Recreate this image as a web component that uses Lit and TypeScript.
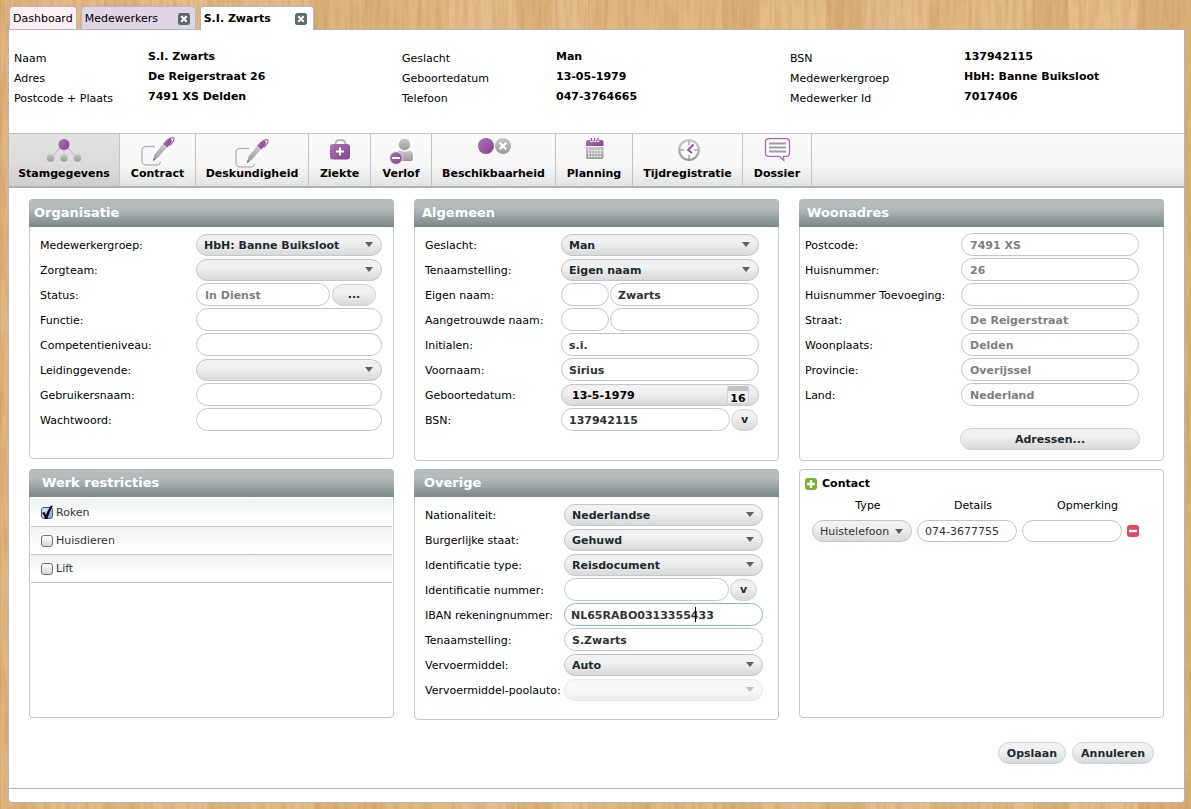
import { LitElement, html, css, svg, nothing, unsafeCSS } from "lit";
import type { TemplateResult } from "lit";
import { customElement, state } from "lit/decorators.js";
import { classMap } from "lit/directives/class-map.js";

/* Wooden desktop: planks of varying tone with a fine vertical grain. */
const PLANKS: Array<[number, string]> = [
  [0, "e1b680"], [35, "e4bc87"], [104, "deb47e"], [138, "e5be8a"], [207, "e0b67f"],
  [242, "e3bc87"], [314, "dcb17a"], [328, "e1b781"], [366, "dbb079"], [386, "e1b882"],
  [448, "e5be8b"], [517, "ddb27b"], [552, "e5bf8b"], [588, "e1b781"], [620, "e0b680"],
  [655, "e1b983"], [723, "dcb17b"], [759, "e4bd88"], [826, "dbb079"], [862, "e5be8b"],
  [930, "e0b680"], [965, "e4bd89"], [1033, "dcb17b"], [1068, "e5be8a"], [1138, "dbb079"],
];
const plankRects = PLANKS.map(([x, c], i) => {
  const w = (PLANKS[i + 1]?.[0] ?? 1191) - x;
  return `<rect x='${x}' width='${w}' height='900' fill='%23${c}'/><rect x='${x}' width='1' height='900' fill='%23c1935e' fill-opacity='.2'/>`;
}).join("");
const WOOD =
  `data:image/svg+xml,<svg xmlns='http://www.w3.org/2000/svg' width='1191' height='900'>` +
  `<filter id='g' x='0' y='0' width='1' height='1' color-interpolation-filters='sRGB'><feTurbulence type='fractalNoise' baseFrequency='.22 .018' numOctaves='3' seed='7'/>` +
  `<feColorMatrix values='0 0 0 0 .72  0 0 0 0 .52  0 0 0 0 .3  1.8 0 0 0 -.7'/></filter>` +
  plankRects +
  `<rect width='1191' height='900' filter='url(%23g)' opacity='.42'/></svg>`;

const CARET =
  `data:image/svg+xml,<svg xmlns='http://www.w3.org/2000/svg' width='8' height='5'><path d='M0 0h8L4 5z' fill='%23606060'/></svg>`;

const gradients = svg`
  <defs>
    <linearGradient id="p" x1="0" y1="0" x2="1" y2="1"><stop offset="0" stop-color="#ab74b3"/><stop offset="1" stop-color="#84408f"/></linearGradient>
    <linearGradient id="g" x1="0" y1="0" x2="0" y2="1"><stop offset="0" stop-color="#c6c8c9"/><stop offset="1" stop-color="#989b9e"/></linearGradient>
  </defs>`;

const pen = svg`
  <path d="M20 10.500H11a4 4 0 0 0-4 4v10.500a4 4 0 0 0 4 4h10.500q3.500 0 4-3.500" fill="none" stroke="#b4b7b9" stroke-width="1.400"/>
  <path d="M18 25l1.500-6.500 8-10 4 3.300-8.500 9.700z" fill="url(#g)"/>
  <path d="M18 25l.7-2.800 1.700 1.300z" fill="#84408f"/>
  <path d="M28 8q3-4.500 6.500-6l2.500 2q-.5 4-5 7.500z" fill="url(#p)"/>
  <path d="M34 3q3.500-2.200 4.700-1t-1.200 4.300l-2.500 3.200" fill="none" stroke="#9a5ba3" stroke-width="1.200"/>`;

const ICONS: Record<string, unknown> = {
  network: svg`
    <path d="M22 9L8.500 23M22 9v14M22 9l13.500 14" stroke="#c3c3c3" stroke-width="1.200"/>
    <circle cx="22" cy="9.500" r="5.500" fill="url(#p)"/>
    <circle cx="8.500" cy="23" r="3.800" fill="url(#g)"/><circle cx="22" cy="23" r="3.800" fill="url(#g)"/><circle cx="35.500" cy="23" r="3.800" fill="url(#g)"/>`,
  pen: svg`<g transform="translate(-1 1)">${pen}</g>`,
  penLow: svg`<g transform="translate(-1 3)">${pen}</g>`,
  bag: svg`
    <path d="M17.500 9q0-4 5-4t5 4" fill="none" stroke="#b4b6b8" stroke-width="1.800"/>
    <rect x="12" y="9" width="20" height="15.500" rx="3" fill="url(#p)"/>
    <path d="M22 12.500v8M18 16.500h8" stroke="#fff" stroke-width="2"/>`,
  person: svg`
    <circle cx="25.500" cy="9.500" r="5.700" fill="url(#g)"/>
    <path d="M17 26v-5q0-5 4-5.500 4.500 2.500 9 0 4 .5 4 5.500v3q0 2-2 2z" fill="url(#g)"/>
    <circle cx="17" cy="23" r="6.300" fill="url(#p)" stroke="#f4f4f4" stroke-width=".8"/>
    <path d="M13 23h8" stroke="#fff" stroke-width="2"/>`,
  availability: svg`
    <circle cx="14" cy="11" r="8" fill="url(#p)"/><circle cx="31" cy="11" r="8" fill="url(#g)"/>
    <path d="M27.700 7.700l6.600 6.600M34.300 7.700l-6.600 6.600" stroke="#fff" stroke-width="2.200"/>`,
  calendar: svg`
    <path d="M14 11V7q0-2 2-2h13.500q2 0 2 2v4z" fill="url(#p)"/>
    <path d="M19.500 3v4M22.700 3v4M26 3v4" stroke="#f8f8f8" stroke-width="2.400"/>
    <path d="M19.500 3v3M22.700 3v3M26 3v3" stroke="#8d4b98" stroke-width="1.200"/>
    <path d="M14 12h17.500v10q0 2-2 2H16q-2 0-2-2z" fill="url(#g)"/>
    <path d="M16 15.500h14M16 18.500h14M16 21.500h14" stroke="#fff" stroke-width="1.300" stroke-dasharray="1.600 1.300"/>`,
  clock: svg`
    <circle cx="23" cy="15" r="9.800" fill="#fafafa" stroke="url(#g)" stroke-width="2.200"/>
    <path d="M23 6v4M23 20v4M14 15h4M28 15h4" stroke="#a4a7a9" stroke-width="1.500"/>
    <path d="M27.500 9.500L22 15l4 3" fill="none" stroke="#9350a0" stroke-width="1.800"/>`,
  speech: svg`
    <path d="M14 3.700h17q3.500 0 3.500 3.300v11q0 3.300-3.500 3.300h-2.500l.2 4-4.200-4H14q-3.500 0-3.500-3.300V7q0-3.300 3.500-3.300z" fill="#fdfdfd" stroke="#a06ca9" stroke-width="1.300"/>
    <path d="M14 8.500h17M14 12.500h17M14 16.500h17" stroke="#9a9c9e" stroke-width="1.800"/>`,
};

const closeIcon = svg`
  <rect width="12" height="12" rx="2.500" fill="#5d6a6d"/>
  <path d="M3.300 3.300l5.400 5.400M8.700 3.300L3.300 8.700" stroke="#fff" stroke-width="2.200"/>`;

interface Field {
  id: string;
  label: string;
  kind?: "text" | "select" | "date";
  value?: string;
  prefix?: boolean;
  action?: string;
  readonly?: boolean;
  disabled?: boolean;
  active?: boolean;
}

const ORGANISATION: Field[] = [
  { id: "groep", label: "Medewerkergroep:", kind: "select", value: "HbH: Banne Buiksloot" },
  { id: "zorgteam", label: "Zorgteam:", kind: "select" },
  { id: "status", label: "Status:", value: "In Dienst", readonly: true, action: "..." },
  { id: "functie", label: "Functie:" },
  { id: "niveau", label: "Competentieniveau:" },
  { id: "leiding", label: "Leidinggevende:", kind: "select" },
  { id: "gebruiker", label: "Gebruikersnaam:" },
  { id: "wachtwoord", label: "Wachtwoord:" },
];
const GENERAL: Field[] = [
  { id: "geslacht", label: "Geslacht:", kind: "select", value: "Man" },
  { id: "tenaam", label: "Tenaamstelling:", kind: "select", value: "Eigen naam" },
  { id: "eigen", label: "Eigen naam:", value: "Zwarts", prefix: true },
  { id: "aangetrouwd", label: "Aangetrouwde naam:", prefix: true },
  { id: "initialen", label: "Initialen:", value: "s.i." },
  { id: "voornaam", label: "Voornaam:", value: "Sirius" },
  { id: "geboorte", label: "Geboortedatum:", kind: "date", value: "13-5-1979" },
  { id: "bsn", label: "BSN:", value: "137942115", action: "v" },
];
const ADDRESS: Field[] = [
  { id: "postcode", label: "Postcode:", value: "7491 XS", readonly: true },
  { id: "huisnummer", label: "Huisnummer:", value: "26", readonly: true },
  { id: "toevoeging", label: "Huisnummer Toevoeging:", readonly: true },
  { id: "straat", label: "Straat:", value: "De Reigerstraat", readonly: true },
  { id: "woonplaats", label: "Woonplaats:", value: "Delden", readonly: true },
  { id: "provincie", label: "Provincie:", value: "Overijssel", readonly: true },
  { id: "land", label: "Land:", value: "Nederland", readonly: true },
];
const OTHER: Field[] = [
  { id: "nationaliteit", label: "Nationaliteit:", kind: "select", value: "Nederlandse" },
  { id: "burgerlijk", label: "Burgerlijke staat:", kind: "select", value: "Gehuwd" },
  { id: "idtype", label: "Identificatie type:", kind: "select", value: "Reisdocument" },
  { id: "idnummer", label: "Identificatie nummer:", action: "v" },
  { id: "iban", label: "IBAN rekeningnummer:", value: "NL65RABO0313355433", active: true },
  { id: "rekeningnaam", label: "Tenaamstelling:", value: "S.Zwarts" },
  { id: "vervoer", label: "Vervoermiddel:", kind: "select", value: "Auto" },
  { id: "poolauto", label: "Vervoermiddel-poolauto:", kind: "select", disabled: true },
];
const SUMMARY = [
  [["Naam", "S.I. Zwarts"], ["Adres", "De Reigerstraat 26"], ["Postcode + Plaats", "7491 XS Delden"]],
  [["Geslacht", "Man"], ["Geboortedatum", "13-05-1979"], ["Telefoon", "047-3764665"]],
  [["BSN", "137942115"], ["Medewerkergroep", "HbH: Banne Buiksloot"], ["Medewerker Id", "7017406"]],
];
const SECTIONS = [
  ["Stamgegevens", "network"], ["Contract", "pen"], ["Deskundigheid", "penLow"],
  ["Ziekte", "bag"], ["Verlof", "person"], ["Beschikbaarheid", "availability"],
  ["Planning", "calendar"], ["Tijdregistratie", "clock"], ["Dossier", "speech"],
];

@customElement("app-root")
export class AppRoot extends LitElement {
  @state() private section = "Stamgegevens";

  static styles = css`
    :host {
      display: flex;
      flex-direction: column;
      box-sizing: border-box;
      min-height: 100vh;
      padding: 6px 6px 6px 8px;
      background: #e0b983 url("${unsafeCSS(WOOD)}");
      font: 11px/14px Verdana, "DejaVu Sans", sans-serif;
      color: #000;
    }
    * { box-sizing: border-box; }
    button, input, select { font: inherit; margin: 0; color: inherit; }
    button { padding: 0; cursor: pointer; }

    .tabs { display: flex; gap: 4px; height: 23px; padding-left: 1px; }
    .tab {
      display: flex; align-items: center; justify-content: space-between;
      padding: 1px 3px 0; border: 1px solid #b3b8c4; border-bottom: 0;
      border-radius: 4px 4px 0 0; background: #fbeff4;
    }
    .tab.list { width: 115px; padding-right: 5px; background: #e0d5e4; }
    .tab.current { width: 114px; height: 24px; padding: 0 6px 0 3px; background: #fff; font-weight: bold; z-index: 1; }
    .tab a { color: inherit; text-decoration: none; }
    .close { width: 12px; height: 12px; border: 0; background: none; display: block; }
    .close svg { display: block; }

    .window {
      flex: 1; display: flex; flex-direction: column;
      border: 1px solid #b2b5bb; border-radius: 0 0 4px 4px; background: #fff;
    }
    .summary {
      display: grid; grid-template-columns: 388fr 388fr 394fr;
      min-height: 103px; padding: 17px 0 0 5px;
    }
    .facts { display: grid; grid-template-columns: 134px 1fr; grid-auto-rows: 20px; margin: 0; }
    .facts.second { grid-template-columns: 154px 1fr; }
    .facts.third { grid-template-columns: 174px 1fr; }
    .facts dt { padding-top: 4px; line-height: 16px; }
    .facts dd { margin: 0; font-weight: bold; line-height: 20px; }

    .toolbar {
      display: grid; grid-template-columns: 111px 76px 113px 62px 61px 124px 77px 110px 69px;
      height: 55px; border-top: 1px solid #c3c3c3; border-bottom: 2px solid #afb2b2;
      background: linear-gradient(#fafafa, #f6f6f6 60%, #e2e4e4);
    }
    .section {
      display: flex; flex-direction: column; align-items: center;
      padding: 1px 0 0; border: 0; border-right: 1px solid #c3c3c3;
      background: none; font-weight: bold; white-space: nowrap;
    }
    .section.selected { background: linear-gradient(#e2e2e2, #dcdcdc 60%, #cdcdcd); }
    .section svg { display: block; width: 44px; height: 32px; overflow: visible; }

    .cards {
      display: grid; grid-template-columns: repeat(3, 1fr); gap: 8px 20px;
      align-items: start; padding: 11px 20px 0;
    }
    .card { min-height: 262px; border: 1px solid #c4c6c6; border-radius: 4px; background: #fff; }
    .card.organisation { min-height: 260px; }
    .card.restrictions { min-height: 249px; }
    .card.other { min-height: 251px; }
    .card.contact { min-height: 249px; padding: 7px 5px; }
    .card h2 {
      margin: -1px -1px 0; height: 28px; padding-left: 8px; border-radius: 4px 4px 0 0;
      background: linear-gradient(#b6bcbc 30%, #7d8888);
      color: #fff; font-size: 13px; line-height: 28px;
    }
    .organisation h2 { padding-left: 5px; }
    .restrictions h2 { padding-left: 13px; }
    .other h2 { padding-left: 10px; }

    .fields { display: grid; grid-auto-rows: 25px; padding: 5px 11px 0 10px; }
    .field { display: grid; grid-template-columns: 156px 1fr; align-items: center; }
    .algemeen .fields { padding-right: 19px; }
    .algemeen .field { grid-template-columns: 136px 1fr; }
    .address .fields { padding: 5px 24px 0 5px; }
    .other .fields { padding-right: 15px; }
    .other .field { grid-template-columns: 139px 1fr; }
    .field > label { padding-top: 2px; white-space: nowrap; line-height: 23px; }
    .entry { position: relative; display: flex; align-items: center; gap: 1px; min-width: 0; }

    .pill {
      flex: 1; width: 100%; min-width: 0; height: 23px; padding: 1px 7px 0;
      border: 1px solid #c4c6c6; border-radius: 12px; background: #fff;
      font-weight: bold; color: #333; outline: none;
    }
    .pill.prefix { flex: 0 0 48px; }
    .pill.readonly { color: #808080; padding-left: 8px; }
    .pill.active { border-color: #8fb3cc; padding-left: 6px; }
    .pill.plain { font-weight: normal; height: 22px; }
    select.pill {
      appearance: none; height: 22px; padding-top: 2px; color: #1d2b2e;
      background: url("${unsafeCSS(CARET)}") no-repeat right 8px center, linear-gradient(#f1f1f1 35%, #d9d9d9);
    }
    select.pill:disabled { opacity: 0.4; }
    .button {
      height: 22px; padding: 1px 0 0; border: 1px solid #d2d2d2; border-radius: 11px;
      background: linear-gradient(#f1f1f1 35%, #d9d9d9); color: #1d2b2e; font-weight: bold;
    }
    .more { width: 44px; margin: 0 6px 0 1px; }
    .pick { width: 27px; margin-right: 1px; }
    .other .pick { margin-right: 6px; }
    .date {
      flex: 1; min-width: 0; display: flex; align-items: center; height: 22px; padding-right: 9px;
      border: 1px solid #c4c6c6; border-radius: 11px; background: linear-gradient(#f1f1f1 35%, #d9d9d9);
    }
    .date input { flex: 1; width: 100%; min-width: 0; border: 0; padding: 2px 10px 0; background: none; font-weight: bold; outline: none; }
    .day {
      flex: none; width: 22px; height: 18px; padding-top: 4px; border: 1px solid #cfcfcf; border-top: 5px solid #c2c3c5;
      border-radius: 2px; background: #efefef; font-weight: bold; line-height: 8px;
    }
    .cursor { position: absolute; left: 131px; top: 4px; width: 1px; height: 15px; background: #000; }
    .addresses { display: block; width: 180px; margin: 21px 23px 0 auto; }

    .checks { list-style: none; margin: 0; padding: 2px 1px 0; }
    .checks li { height: 28px; border-bottom: 1px solid #c4c6c6; background: linear-gradient(#eff0f0, #fff 70%); }
    .checks label { display: flex; align-items: center; gap: 3px; height: 28px; padding-left: 10px; color: #333; }
    .checks input {
      appearance: none; width: 12px; height: 12px; border: 1px solid #707274; border-radius: 3px;
      background: linear-gradient(#fff, #d4d4d4);
    }
    .checks input:checked { border-color: #3c5a94; background: linear-gradient(135deg, #e6f0fc, #7ba6dc); }
    .box { display: grid; }
    .box > * { grid-area: 1 / 1; }
    .box svg { overflow: visible; pointer-events: none; }

    .contact h3 { display: flex; align-items: center; gap: 5px; margin: 0; font-size: 11px; line-height: 14px; }
    .icon { display: block; width: 12px; height: 12px; border: 0; background: none; }
    .icon svg { display: block; }
    .contact table { table-layout: fixed; width: 339px; margin-left: 2px; border-spacing: 5px 0; }
    .contact th { height: 29px; padding: 0 0 0 12px; font-weight: normal; }
    .contact td { height: 22px; padding: 0; }
    .contact select.pill { padding-right: 18px; color: #333; }
    .remove { width: 14px; }

    .actions { display: flex; justify-content: flex-end; gap: 6px; padding: 22px 30px 24px; }
    .actions .button { padding: 1px 8px 0; }
    .status { height: 14px; margin-top: auto; border-top: 1px solid #b2b5bb; }
  `;

  private renderField(f: Field): TemplateResult {
    let control: TemplateResult;
    if (f.kind === "select") {
      control = html`<select class="pill" id=${f.id} ?disabled=${f.disabled}><option>${f.value ?? ""}</option></select>`;
    } else if (f.kind === "date") {
      control = html`<span class="date"><input id=${f.id} .value=${f.value ?? ""} /><button class="day" aria-label="Kies datum">16</button></span>`;
    } else {
      control = html`
        ${f.prefix ? html`<input class="pill prefix" aria-label="Voorvoegsel" />` : nothing}
        <input id=${f.id} .value=${f.value ?? ""} ?readonly=${f.readonly}
          class=${classMap({ pill: true, readonly: !!f.readonly, active: !!f.active })} />
        ${f.active ? html`<span class="cursor"></span>` : nothing}
        ${f.action ? html`<button class="button ${f.action === "v" ? "pick" : "more"}">${f.action}</button>` : nothing}`;
    }
    return html`<div class="field"><label for=${f.id}>${f.label}</label><div class="entry">${control}</div></div>`;
  }

  private renderCard(kind: string, title: string, fields: Field[], extra: unknown = nothing) {
    return html`<section class="card ${kind}">
      <h2>${title}</h2>
      <div class="fields">${fields.map((f) => this.renderField(f))}</div>
      ${extra}
    </section>`;
  }

  private closeButton() {
    return html`<button class="close" aria-label="Sluiten"><svg width="12" height="12" viewBox="0 0 12 12">${closeIcon}</svg></button>`;
  }

  render() {
    return html`
      <nav class="tabs">
        <div class="tab"><a href="#dashboard">Dashboard</a></div>
        <div class="tab list"><a href="#medewerkers">Medewerkers</a>${this.closeButton()}</div>
        <div class="tab current"><a href="#zwarts">S.I. Zwarts</a>${this.closeButton()}</div>
      </nav>
      <main class="window">
        <header class="summary">
          ${SUMMARY.map((group, i) => html`<dl class="facts ${["first", "second", "third"][i]}">
            ${group.map(([k, v]) => html`<dt>${k}</dt><dd>${v}</dd>`)}
          </dl>`)}
        </header>
        <nav class="toolbar">
          ${SECTIONS.map(([name, icon]) => html`
            <button class=${classMap({ section: true, selected: name === this.section })}
              @click=${() => (this.section = name)}>
              <svg viewBox="0 0 44 32" fill="none">${gradients}${ICONS[icon]}</svg>
              <span>${name}</span>
            </button>`)}
        </nav>
        <div class="cards">
          ${this.renderCard("organisation", "Organisatie", ORGANISATION)}
          ${this.renderCard("algemeen", "Algemeen", GENERAL)}
          ${this.renderCard("address", "Woonadres", ADDRESS, html`<button class="button addresses">Adressen...</button>`)}
          <section class="card restrictions">
            <h2>Werk restricties</h2>
            <ul class="checks">
              ${["Roken", "Huisdieren", "Lift"].map((name, i) => html`<li><label>
                <span class="box"><input type="checkbox" .checked=${i === 0} />
                  ${i === 0 ? html`<svg width="12" height="12" viewBox="0 0 12 12"><path d="M1 6l2.300-1.300L4.800 8Q7 3 10-1.500l1.700.5Q8.500 5 6.300 12H4.300Q3.300 8.500 1 6z" fill="#000"/></svg>` : nothing}
                </span>${name}</label></li>`)}
            </ul>
          </section>
          ${this.renderCard("other", "Overige", OTHER)}
          <section class="card contact">
            <h3>
              <button class="icon" aria-label="Toevoegen"><svg width="12" height="12"><rect width="12" height="12" rx="3" fill="#74b72f"/><path d="M6 2v8M2 6h8" stroke="#fff" stroke-width="2.400"/></svg></button>
              Contact
            </h3>
            <table>
              <colgroup><col /><col /><col /><col class="remove" /></colgroup>
              <thead><tr><th>Type</th><th>Details</th><th colspan="2">Opmerking</th></tr></thead>
              <tbody><tr>
                <td><select class="pill plain" aria-label="Type"><option>Huistelefoon</option></select></td>
                <td><input class="pill plain" aria-label="Details" .value=${"074-3677755"} /></td>
                <td><input class="pill plain" aria-label="Opmerking" /></td>
                <td><button class="icon" aria-label="Verwijderen"><svg width="12" height="12"><rect width="12" height="12" rx="3" fill="#df4763"/><path d="M2 6h8" stroke="#fff" stroke-width="2.400"/></svg></button></td>
              </tr></tbody>
            </table>
          </section>
        </div>
        <div class="actions">
          <button class="button">Opslaan</button>
          <button class="button">Annuleren</button>
        </div>
        <footer class="status"></footer>
      </main>`;
  }
}
